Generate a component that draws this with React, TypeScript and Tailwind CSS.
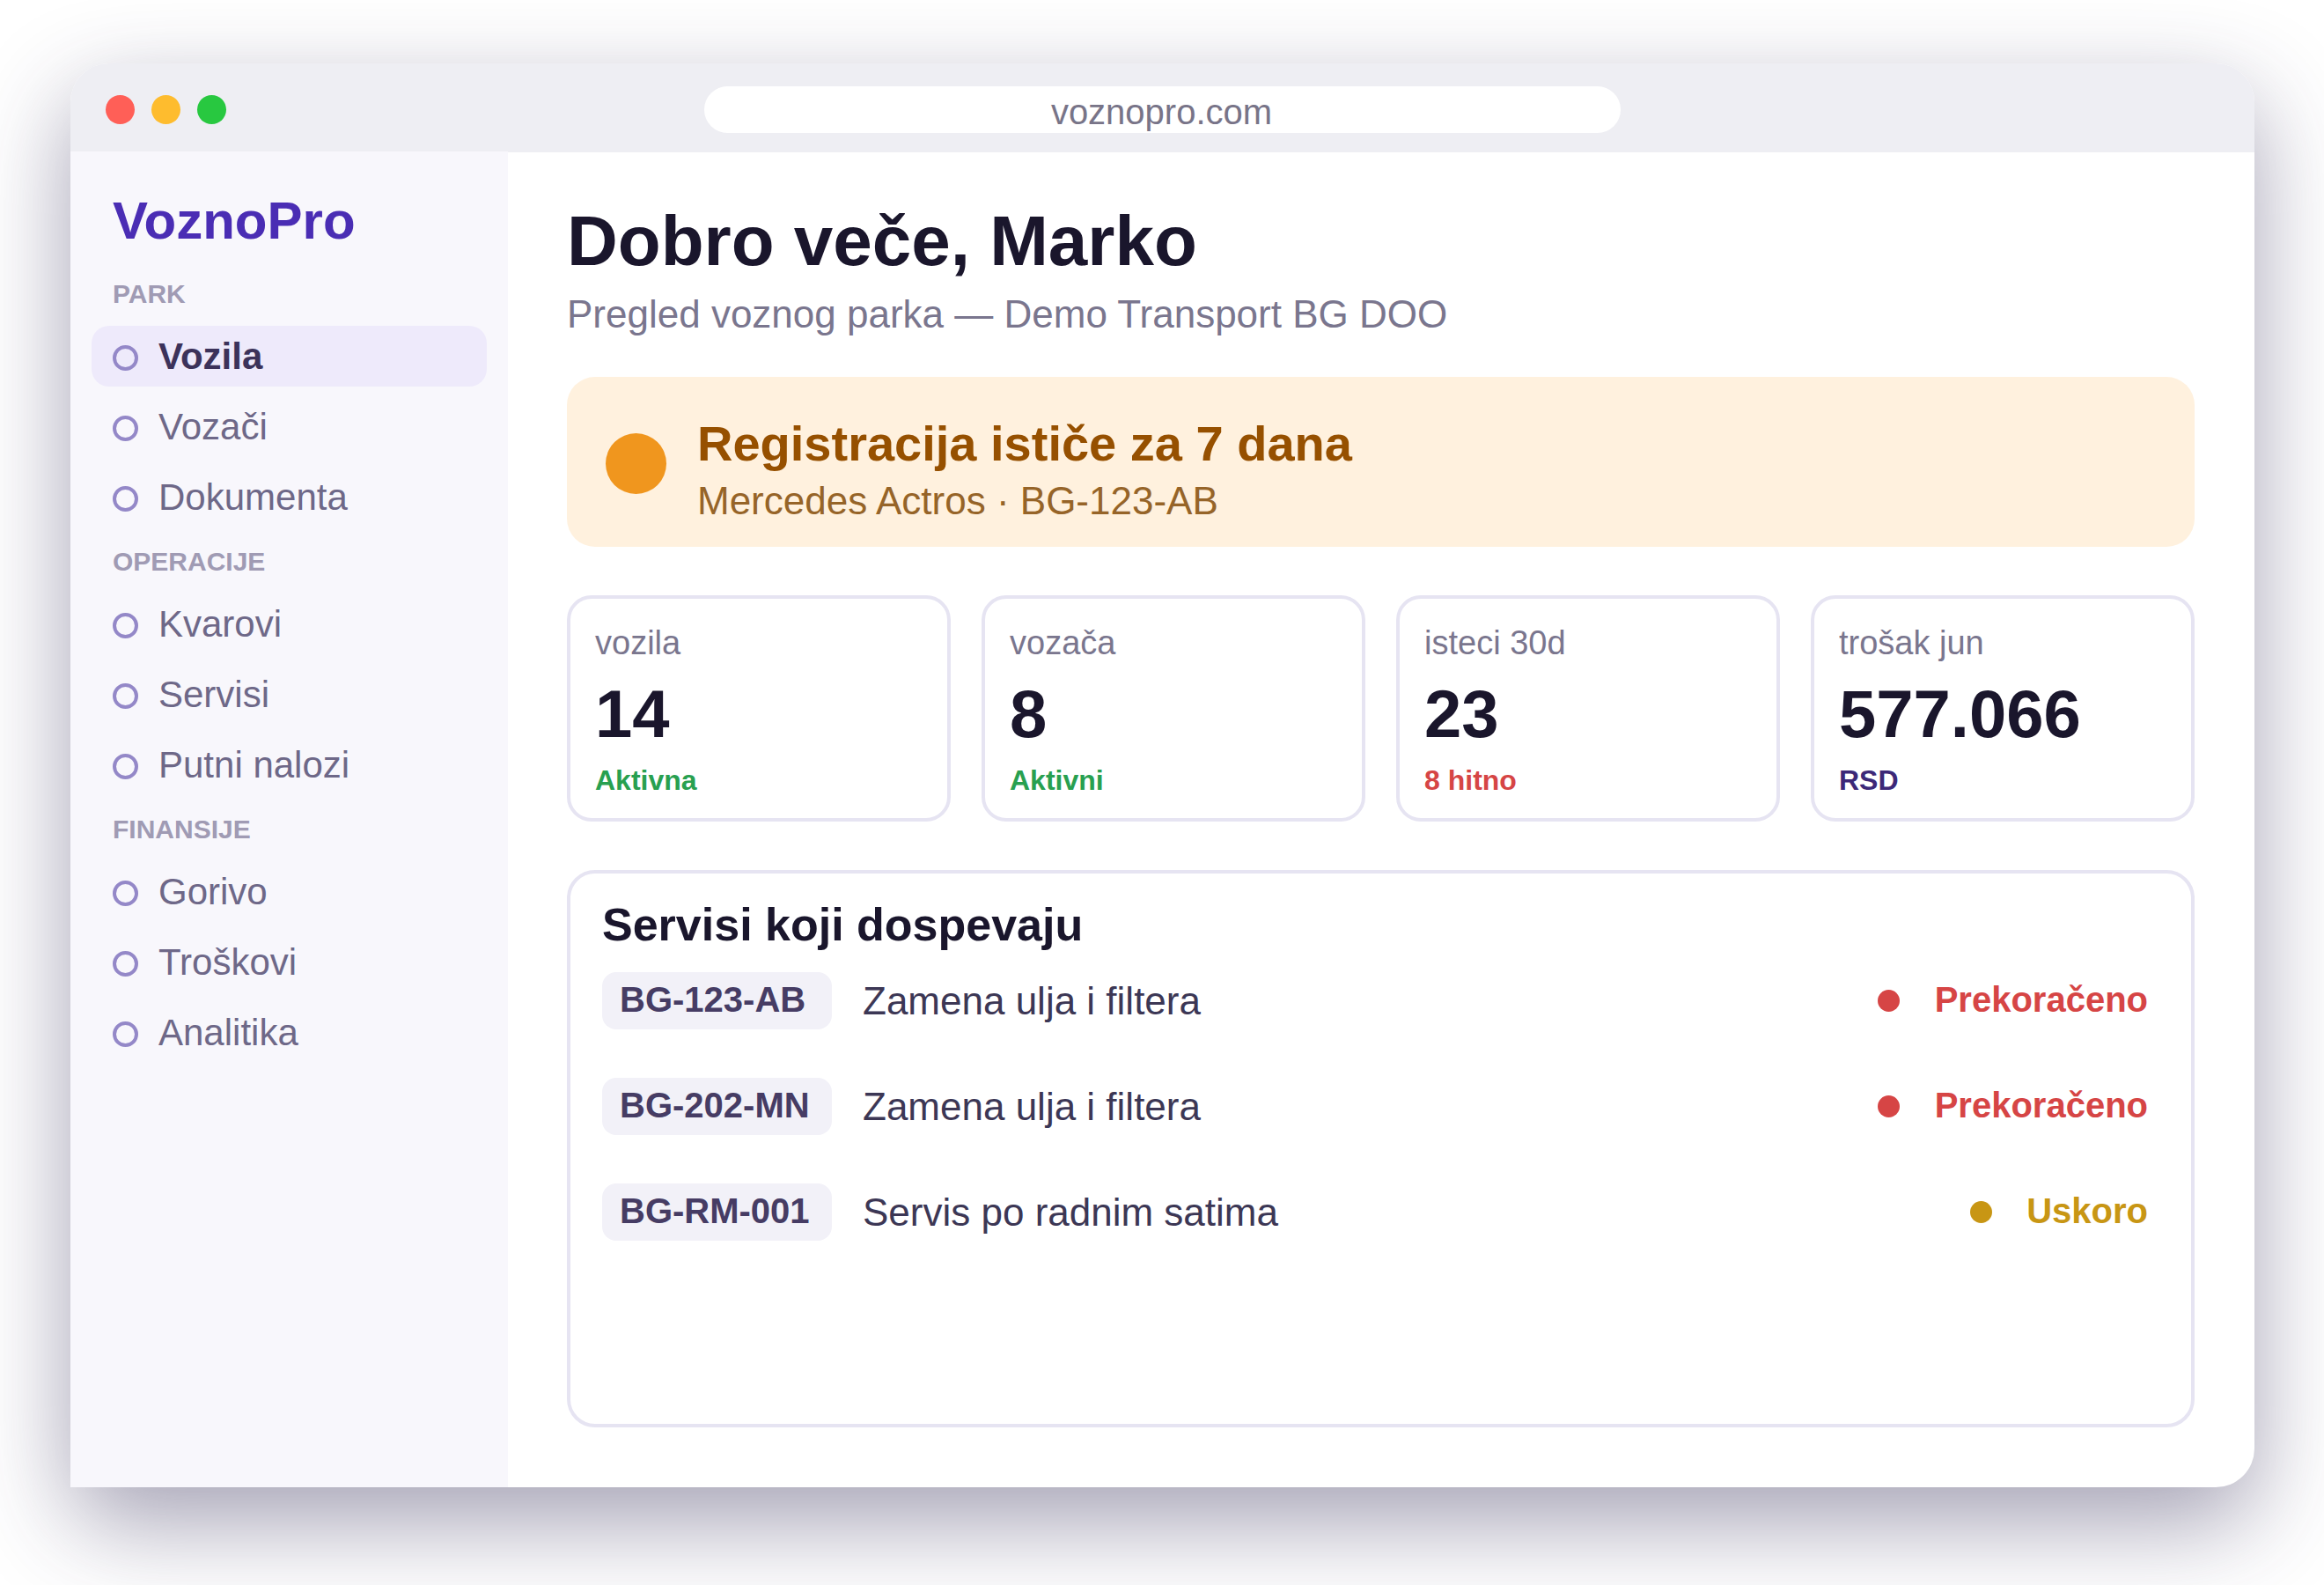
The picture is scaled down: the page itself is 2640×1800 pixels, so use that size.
interface NavGroup {
  label: string
  items: string[]
}

interface Service {
  plate: string
  task: string
  status: string
  dot: string
  text: string
}

const navGroups: NavGroup[] = [
  { label: "PARK", items: ["Vozila", "Vozači", "Dokumenta"] },
  { label: "OPERACIJE", items: ["Kvarovi", "Servisi", "Putni nalozi"] },
  { label: "FINANSIJE", items: ["Gorivo", "Troškovi", "Analitika"] },
]

const stats = [
  { label: "vozila", value: "14", note: "Aktivna", color: "text-[#28a050]" },
  { label: "vozača", value: "8", note: "Aktivni", color: "text-[#28a050]" },
  { label: "isteci 30d", value: "23", note: "8 hitno", color: "text-[#d64545]" },
  { label: "trošak jun", value: "577.066", note: "RSD", color: "text-[#3c2878]" },
]

const services: Service[] = [
  { plate: "BG-123-AB", task: "Zamena ulja i filtera", status: "Prekoračeno", dot: "bg-[#d64545]", text: "text-[#d64545]" },
  { plate: "BG-202-MN", task: "Zamena ulja i filtera", status: "Prekoračeno", dot: "bg-[#d64545]", text: "text-[#d64545]" },
  { plate: "BG-RM-001", task: "Servis po radnim satima", status: "Uskoro", dot: "bg-[#c89614]", text: "text-[#c89614]" },
]

function TitleBar() {
  return (
    <header className="flex items-start h-[101px] rounded-t-[44px] bg-[#eeeef3]">
      <div className="flex gap-[19px] w-[720px] pl-10 pt-9">
        <span className="size-[33px] rounded-full bg-[#ff5f57]" />
        <span className="size-[33px] rounded-full bg-[#febc2e]" />
        <span className="size-[33px] rounded-full bg-[#28c840]" />
      </div>
      <div className="w-[1041px] h-[53px] mt-[26px] pt-[7px] pr-0.5 rounded-full bg-white text-center text-[40px] leading-[44px] text-[#787488]">
        voznopro.com
      </div>
    </header>
  )
}

function NavItem({ label, active }: { label: string; active: boolean }) {
  return (
    <li className={`flex items-start gap-[23px] h-[69px] pl-6 rounded-[20px] ${active ? "bg-[#eeeafb]" : ""}`}>
      <span className="size-[29px] mt-[22px] rounded-full border-4 border-[#9488c8]" />
      <span className={`mt-[11px] text-[42px] leading-[47px] ${active ? "font-bold text-[#3c325a]" : "text-[#6e6888]"}`}>
        {label}
      </span>
    </li>
  )
}

function Sidebar() {
  return (
    <aside className="w-[497px] shrink-0 -mt-px px-6 pt-[45px] bg-[#f8f7fc]">
      <div className="pl-6 mb-[33px] text-[60px] leading-[67px] font-bold text-[#4a2db4]">VoznoPro</div>
      <nav className="flex flex-col gap-[22px]">
        {navGroups.map((group) => (
          <div key={group.label}>
            <div className="pl-6 text-[30px] leading-[33px] font-bold text-[#a09bb4]">{group.label}</div>
            <ul className="flex flex-col gap-[11px] mt-5">
              {group.items.map((item) => (
                <NavItem key={item} label={item} active={item === "Vozila"} />
              ))}
            </ul>
          </div>
        ))}
      </nav>
    </aside>
  )
}

export default function App() {
  return (
    <div className="w-[2640px] h-[1800px] overflow-hidden bg-white pl-20 pt-[72px] font-['Liberation_Sans',Arial,sans-serif]">
      <div className="flex flex-col w-[2481px] h-[1617px] rounded-[44px] bg-white shadow-[0_40px_108px_rgba(44,38,80,0.43)]">
        <TitleBar />

        <div className="flex flex-1">
          <Sidebar />

          <main className="flex-1 pl-[67px] pr-[68px] pt-14">
            <h1 className="text-[80px] leading-[89px] font-bold text-[#1a162c]">Dobro veče, Marko</h1>
            <p className="mt-3.5 text-[44px] leading-[49px] text-[#7a768e]">
              Pregled voznog parka — Demo Transport BG DOO
            </p>

            {/* Expiry alert */}
            <section className="flex items-start gap-[35px] h-[193px] mt-[47px] pl-11 pt-11 rounded-[32px] bg-[#fff1de]">
              <span className="size-[69px] mt-5 rounded-full bg-[#f0961e]" />
              <div>
                <h2 className="text-[56px] leading-[63px] font-bold text-[#965000]">Registracija ističe za 7 dana</h2>
                <p className="mt-[9px] text-[44px] leading-[49px] text-[#966428]">Mercedes Actros · BG-123-AB</p>
              </div>
            </section>

            {/* Stats */}
            <section className="grid grid-cols-4 gap-[35px] mt-[55px]">
              {stats.map((stat) => (
                <div key={stat.label} className="h-[257px] pl-7 pt-[29px] rounded-[28px] border-4 border-[#e6e4f2]">
                  <div className="text-[38px] leading-[42px] text-[#7a768e]">{stat.label}</div>
                  <div className="mt-[17px] text-[76px] leading-[85px] font-bold text-[#1a162c]">{stat.value}</div>
                  <div className={`mt-[15px] text-[32px] leading-[36px] font-bold ${stat.color}`}>{stat.note}</div>
                </div>
              ))}
            </section>

            {/* Upcoming services */}
            <section className="h-[633px] mt-[55px] pl-9 pr-[49px] pt-[29px] rounded-[32px] border-4 border-[#e6e4f2]">
              <h2 className="text-[52px] leading-[58px] font-bold text-[#1a162c]">Servisi koji dospevaju</h2>
              <ul className="flex flex-col gap-[55px] mt-[25px]">
                {services.map((service) => (
                  <li key={service.plate} className="flex items-center h-[65px]">
                    <span className="w-[261px] h-[65px] pl-5 pt-[9px] rounded-2xl bg-[#f2f1f8] text-[40px] leading-[44px] font-bold text-[#463c64]">
                      {service.plate}
                    </span>
                    <span className="ml-[35px] text-[44px] leading-[49px] text-[#3c3755]">{service.task}</span>
                    <span className={`size-[25px] ml-auto rounded-full ${service.dot}`} />
                    <span className={`ml-[39.5px] pb-[3px] text-[40px] leading-[44px] font-bold ${service.text}`}>
                      {service.status}
                    </span>
                  </li>
                ))}
              </ul>
            </section>
          </main>
        </div>
      </div>
    </div>
  )
}
